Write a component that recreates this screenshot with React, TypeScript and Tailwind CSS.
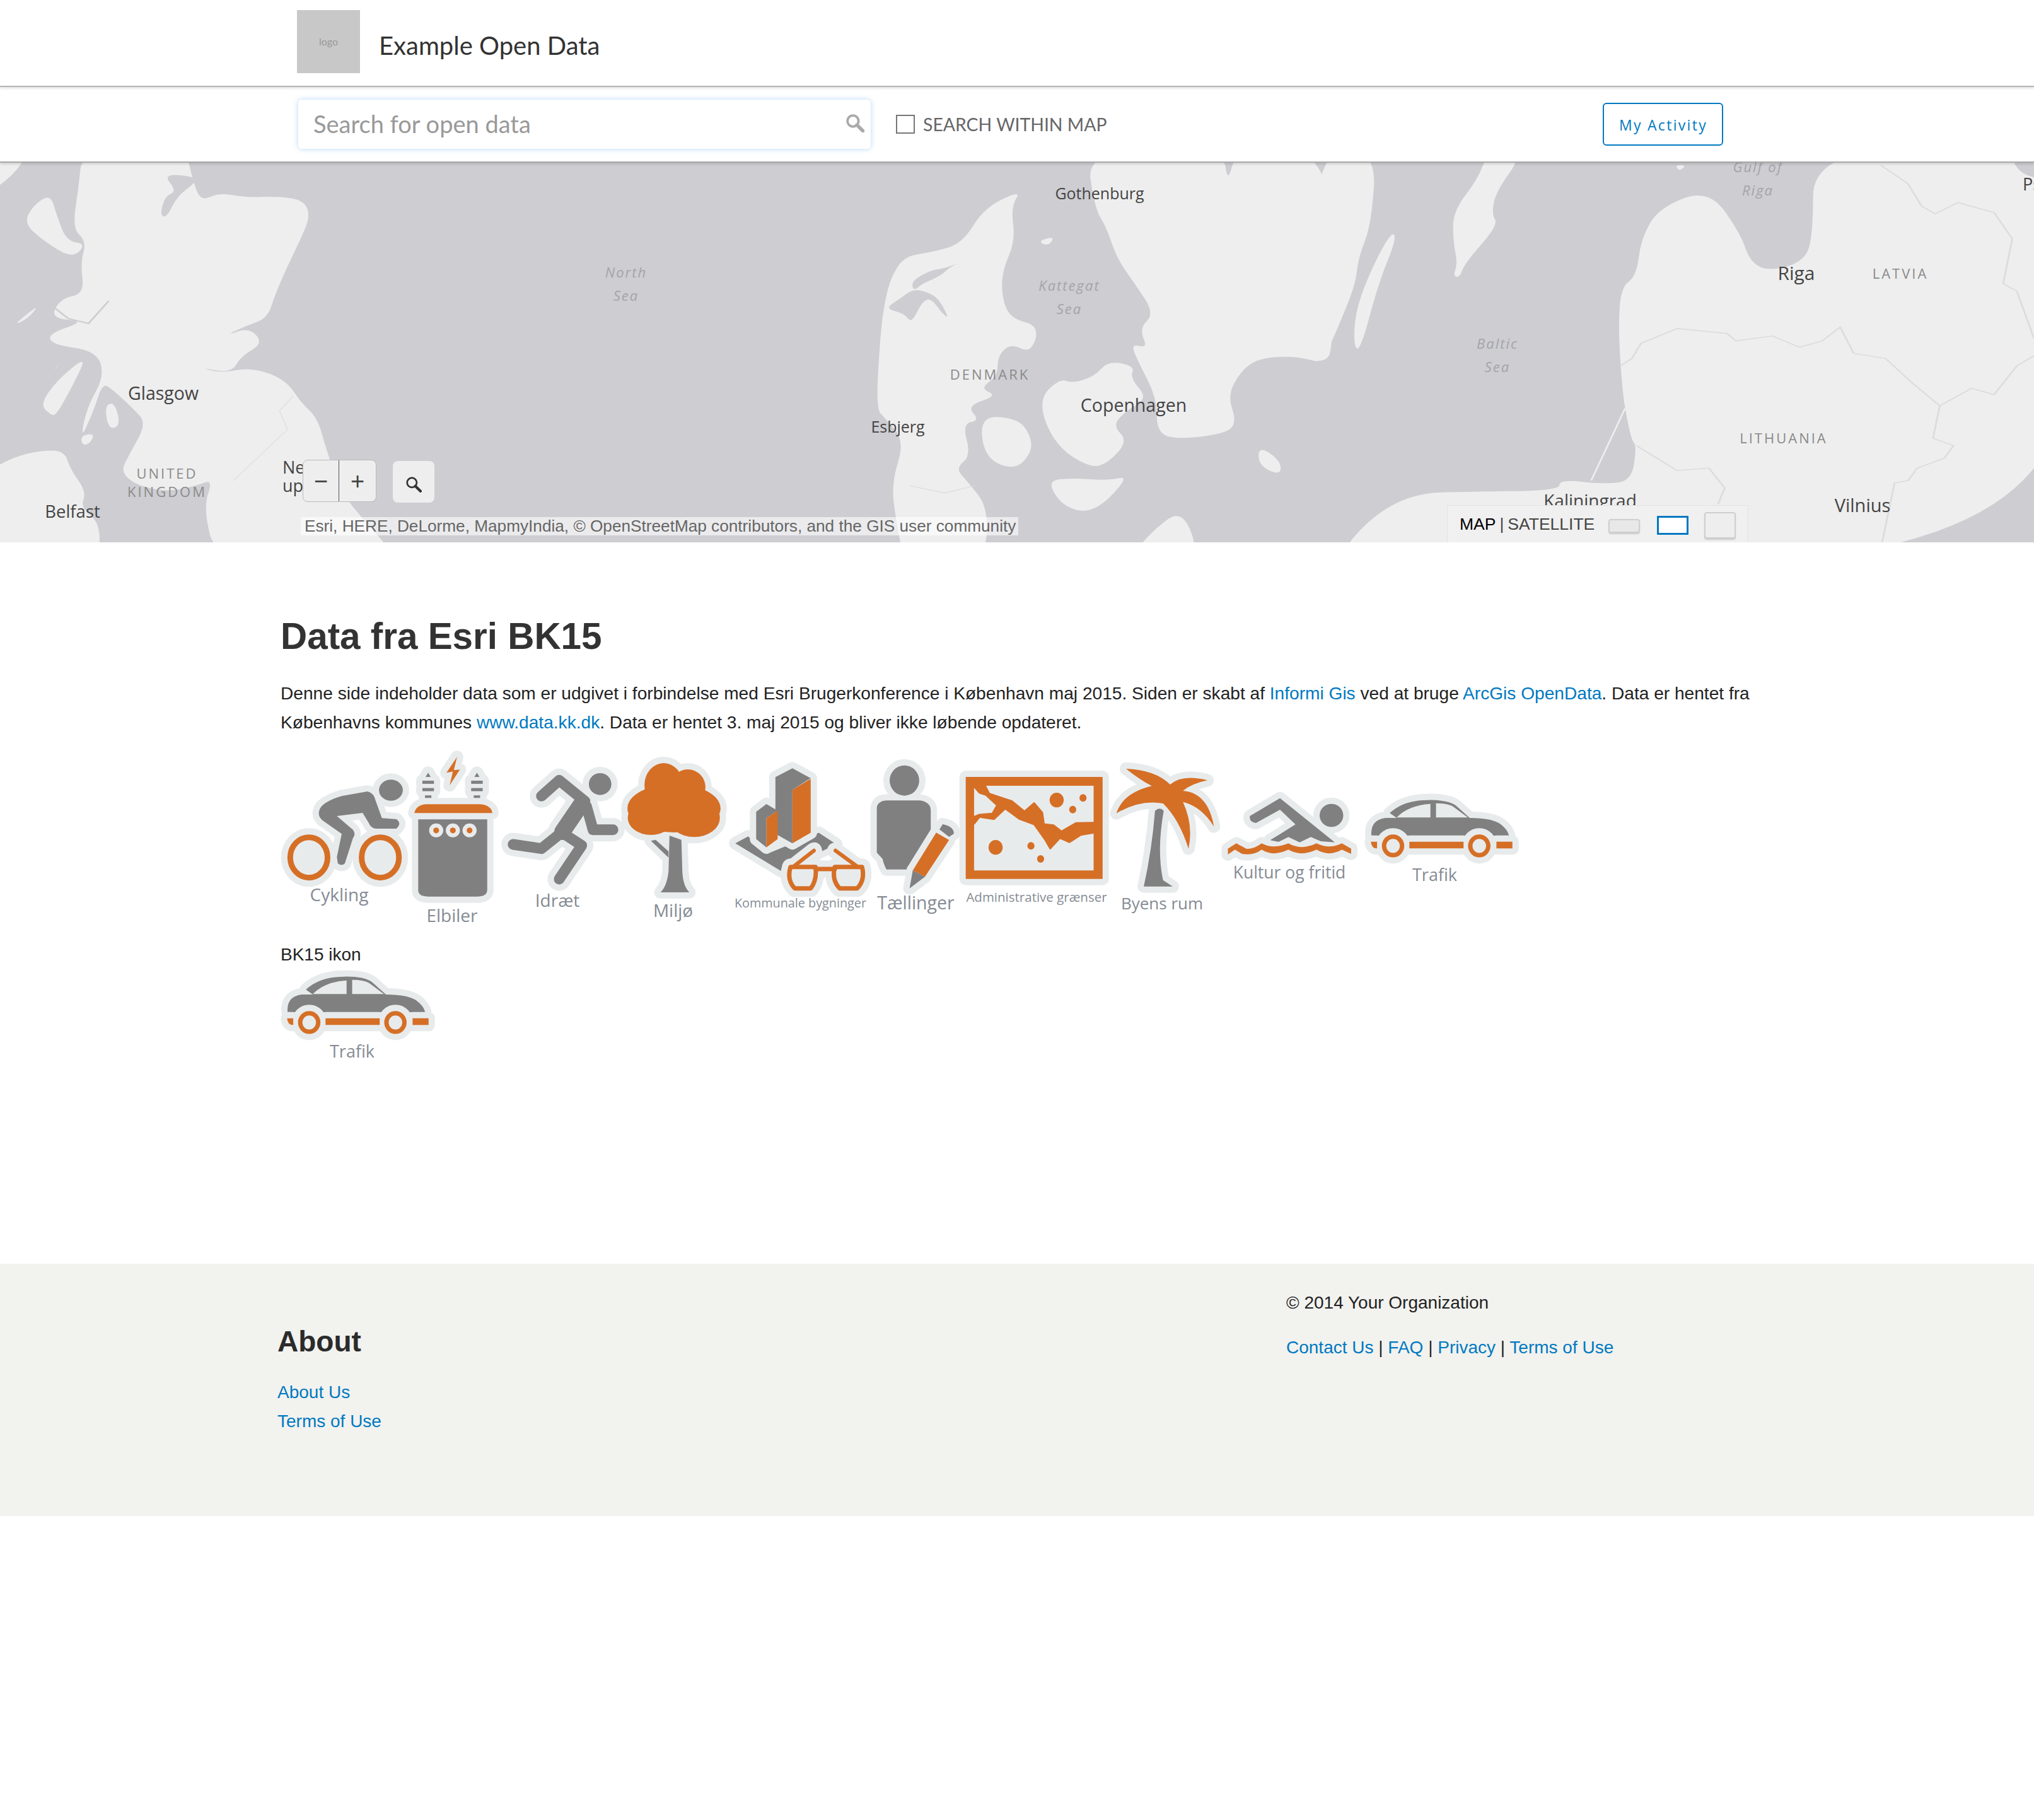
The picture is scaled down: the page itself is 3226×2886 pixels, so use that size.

const ORANGE = '#d56f26'
const GRAY = '#808080'
const HALO = '#e8ebec'
const WATER = '#cdcdd2'
const LAND = '#eeeeee'

type Shape = { d: string; fill?: string; stroke?: string; sw?: number }

// ellipse as a path, icons are drawn in stretched coordinates
function e(cx: number, cy: number, rx: number, ry: number) {
  return `M${cx - rx},${cy} A${rx},${ry} 0 1 0 ${cx + rx},${cy} A${rx},${ry} 0 1 0 ${cx - rx},${cy}Z`
}

// rounds a closed point list into a coastline
function coast(points: string) {
  const pts = points.trim().split(/\s+/).map(p => p.split(',').map(Number))
  const mid = (a: number[], b: number[]) => `${(a[0] + b[0]) / 2},${(a[1] + b[1]) / 2}`
  let d = `M${mid(pts[pts.length - 1], pts[0])}`
  pts.forEach((p, i) => {
    d += ` Q${p[0]},${p[1]} ${mid(p, pts[(i + 1) % pts.length])}`
  })
  return d + 'Z'
}

function Sticker({ view, w, h, layers }: { view: string; w: number; h: number; layers: Shape[][] }) {
  return (
    <svg width={w} height={h} viewBox={view} preserveAspectRatio="none" className="block overflow-visible">
      {layers.map((shapes, i) => (
        <g key={i} strokeLinejoin="round" strokeLinecap="round">
          {shapes.map((s, j) => (
            <path key={j} d={s.d} fill={s.fill ? HALO : 'none'} stroke={HALO} strokeWidth={(s.sw ?? 0) + 20} vectorEffect="non-scaling-stroke" />
          ))}
          {shapes.map((s, j) => (
            <path key={j} d={s.d} fill={s.fill ?? 'none'} stroke={s.stroke ?? 'none'} strokeWidth={s.sw ?? 0} vectorEffect="non-scaling-stroke" />
          ))}
        </g>
      ))}
    </svg>
  )
}

const bike: Shape[][] = [[
  { d: e(393, 212, 37, 50), fill: GRAY },
  { d: 'M170,310 Q175,270 240,240 L320,218 Q340,225 345,260 L365,345 L410,350 Q428,370 410,395 L345,395 Q330,390 325,370 L305,320 L225,335 L275,400 Q285,420 275,440 L250,560 Q240,575 228,560 L225,530 L240,420 L180,355 Q165,335 170,310Z', fill: GRAY },
  { d: e(138, 532, 58, 96), fill: HALO, stroke: ORANGE, sw: 9 },
  { d: e(360, 532, 58, 96), fill: HALO, stroke: ORANGE, sw: 9 },
]]

const charger: Shape[][] = [[
  { d: 'M477,352 H692 V690 Q692,720 660,720 H510 Q477,720 477,690Z', fill: GRAY },
  { d: 'M465,322 Q470,285 500,280 H670 Q705,285 708,322Z', fill: ORANGE },
  { d: e(533, 405, 22, 33), fill: HALO },
  { d: e(585, 405, 22, 33), fill: HALO },
  { d: e(637, 405, 22, 33), fill: HALO },
  { d: e(533, 405, 9, 14), fill: ORANGE },
  { d: e(585, 405, 9, 14), fill: ORANGE },
  { d: e(637, 405, 9, 14), fill: ORANGE },
  { d: 'M508,130 L500,150 H516Z', fill: GRAY },
  { d: 'M490,168 H526 V183 H490Z', fill: GRAY },
  { d: 'M490,203 H526 V218 H490Z', fill: GRAY },
  { d: 'M498,238 H518 V250 H498Z', fill: GRAY },
  { d: 'M660,130 L652,150 H668Z', fill: GRAY },
  { d: 'M642,168 H678 V183 H642Z', fill: GRAY },
  { d: 'M642,203 H678 V218 H642Z', fill: GRAY },
  { d: 'M650,238 H670 V250 H650Z', fill: GRAY },
  { d: 'M598,55 L565,130 L585,125 L575,190 L607,115 L588,118Z', fill: ORANGE },
]]

const runner: Shape[][] = [[
  { d: e(1042, 183, 35, 52), fill: GRAY },
  { d: 'M860,240 L915,165 L995,265', stroke: GRAY, sw: 17 },
  { d: 'M985,275 L925,410', stroke: GRAY, sw: 26 },
  { d: 'M925,410 L860,490 L772,470', stroke: GRAY, sw: 17 },
  { d: 'M935,425 L985,475 L915,635', stroke: GRAY, sw: 17 },
  { d: 'M1000,290 L1020,400 L1082,400', stroke: GRAY, sw: 17 },
]]

const tree: Shape[][] = [[
  { d: 'M1258,430 L1295,450 L1298,600 Q1300,670 1320,700 H1230 Q1250,670 1255,600Z', fill: GRAY },
  { d: 'M1200,455 L1215,450 L1255,505 V535Z', fill: GRAY },
  { d: e(1272, 300, 145, 115), fill: ORANGE },
  { d: e(1240, 190, 60, 105), fill: ORANGE },
  { d: e(1315, 200, 55, 85), fill: ORANGE },
  { d: e(1200, 345, 72, 82), fill: ORANGE },
  { d: e(1335, 345, 80, 92), fill: ORANGE },
]]

const buildings: Shape[][] = [
  [{ d: 'M90,465 L130,432 L190,515 L350,415 L405,470 L255,580 L235,600Z', fill: GRAY }],
  [
    { d: 'M215,150 L268,108 L325,155 L268,210 V465 L215,420Z', fill: GRAY },
    { d: 'M268,210 L325,158 V415 L268,465Z', fill: ORANGE },
    { d: 'M155,315 L187,278 L222,310 L187,345 V485 L155,445Z', fill: GRAY },
    { d: 'M187,345 L222,310 V445 L187,485Z', fill: ORANGE },
  ],
  [
    { d: 'M262,578 H340 Q345,640 325,680 H275 Q250,640 262,578Z', fill: HALO, stroke: ORANGE, sw: 7 },
    { d: 'M400,578 H485 Q495,640 470,680 H415 Q390,640 400,578Z', fill: HALO, stroke: ORANGE, sw: 7 },
    { d: 'M340,588 H400', stroke: ORANGE, sw: 7 },
    { d: 'M270,578 L335,500', stroke: ORANGE, sw: 6 },
    { d: 'M472,578 L402,500', stroke: ORANGE, sw: 6 },
  ],
]

const person: Shape[][] = [
  [
    { d: e(616, 167, 46, 72), fill: GRAY },
    { d: 'M560,262 H665 Q698,270 698,310 V430 L640,590 H560 Q550,560 548,540 L530,510 V300 Q530,265 560,262Z', fill: GRAY },
  ],
  [
    { d: 'M715,415 L755,450 L680,625 L642,595Z', fill: ORANGE },
    { d: 'M642,595 L680,625 L632,680Z', fill: GRAY },
    { d: 'M735,375 Q770,385 770,420 L755,435 L725,400Z', fill: GRAY },
  ],
]

const boundary: Shape[][] = [[
  { d: 'M807,150 H1233 V635 H807Z', fill: ORANGE },
  { d: 'M833,192 H1205 V595 H833Z', fill: HALO },
  { d: 'M833,195 H868 L880,230 L950,265 L990,315 L1020,275 L1045,320 L1050,375 L1080,380 L1105,410 L1150,370 L1205,368 V415 L1165,425 L1130,460 L1100,440 L1070,490 L1055,450 L1020,375 L975,350 L930,300 L895,350 L850,340 L833,372 V340 L850,330 L890,325 L905,285 L870,235 L850,225 L833,195Z', fill: ORANGE, stroke: ORANGE, sw: 3 },
  { d: e(1090, 260, 22, 35), fill: ORANGE },
  { d: e(1172, 250, 11, 18), fill: ORANGE },
  { d: e(1140, 305, 11, 18), fill: ORANGE },
  { d: e(900, 485, 22, 35), fill: ORANGE },
  { d: e(1010, 478, 11, 18), fill: ORANGE },
  { d: e(1040, 540, 11, 18), fill: ORANGE },
]]

const palm: Shape[][] = [[
  { d: 'M1395,310 Q1410,290 1422,310 Q1400,500 1420,640 L1450,670 H1360 Q1385,500 1395,310Z', fill: GRAY },
  { d: 'M1305,110 Q1395,115 1442,185 Q1480,135 1558,165 Q1510,180 1482,215 Q1560,225 1578,385 Q1540,290 1482,268 Q1515,380 1499,490 Q1470,350 1420,275 Q1350,255 1275,322 Q1295,225 1385,192 Q1345,160 1305,110Z', fill: ORANGE },
]]

const swimmer: Shape[][] = [[
  { d: e(698, 332, 42, 55), fill: GRAY },
  { d: 'M515,250 L710,460 L660,455 L625,435 L585,460 L545,435 L510,458 L480,450 L570,375 L515,305 L430,368 Q405,365 408,335Z', fill: GRAY },
  { d: 'M330,490 L360,465 L395,490 Q420,495 450,465 Q490,495 545,465 Q590,500 645,465 Q690,495 735,465 L768,490 V515 L735,495 Q690,530 645,495 Q590,530 545,495 Q490,530 450,495 Q420,525 380,515 L355,495 L330,518Z', fill: ORANGE },
]]

const car: Shape[][] = [
  [
    { d: 'M905,322 Q955,260 1040,260 Q1110,258 1140,285 L1190,345 H930Z', fill: GRAY },
    { d: 'M930,343 Q970,285 1050,278 V343Z', fill: HALO },
    { d: 'M1070,275 Q1110,275 1130,290 L1183,343 H1070Z', fill: HALO },
    { d: 'M840,430 Q835,355 890,345 H1190 Q1270,345 1300,375 Q1325,400 1330,430 H840Z', fill: GRAY },
  ],
  [
    { d: 'M975,458 H1168 V490 H975Z', fill: ORANGE },
    { d: 'M1285,458 H1342 V490 H1285Z', fill: ORANGE },
    { d: 'M838,458 H860 V490 Q840,490 838,458Z', fill: ORANGE },
    { d: e(917, 478, 32, 44), fill: HALO, stroke: ORANGE, sw: 7 },
    { d: e(1224, 478, 32, 44), fill: HALO, stroke: ORANGE, sw: 7 },
  ],
]

function SearchGlyph({ color, size, width }: { color: string; size: number; width: number }) {
  return (
    <svg width={size} height={size} viewBox="0 0 24 24" fill="none" stroke={color} strokeLinecap="round">
      <circle cx="9.5" cy="9.5" r="7" strokeWidth={width} />
      <path d="M14.5 14.5 L22 22" strokeWidth={width + 1.5} />
    </svg>
  )
}

function MapShapes() {
  return (
    <svg viewBox="0 256 3226 602" preserveAspectRatio="none" className="absolute inset-0 h-full w-full blur-[0.6px]">
      {/* Scotland, north England, Ireland */}
      <g transform="translate(0,250) scale(0.6378,0.3954)" fill={LAND}>
        <path d={coast('205,-40 462,-40 480,90 500,170 545,135 610,155 690,150 755,165 772,230 745,330 715,430 685,540 665,640 610,670 560,710 620,675 655,740 600,790 575,860 495,835 550,860 625,835 710,885 750,980 790,1040 812,1170 850,1340 900,1440 1000,1620 540,1620 505,1400 530,1285 490,1310 420,1335 340,1310 300,1255 320,1190 365,1060 330,1000 280,925 255,900 235,1000 200,1130 215,1000 260,870 240,770 130,745 120,700 215,650 125,640 150,560 210,540 200,420 215,330 180,280 195,120')} />
        <path d={coast('60,260 80,190 125,140 140,220 165,330 215,340 180,400 110,330')} />
        <path d={coast('-40,150 30,70 70,-20 -40,-40')} />
        <path d={coast('30,670 100,580 70,640')} />
        <path d={coast('140,840 150,810 135,850')} />
        <path d={coast('100,985 140,890 215,790 190,880 140,1030 125,1025')} />
        <path d={coast('260,990 285,975 300,1070 270,1085')} />
        <path d={coast('205,1150 200,1110 235,1100 225,1140')} />
        <path d={coast('-40,1260 35,1195 100,1170 160,1170 175,1245 215,1335 200,1400 250,1460 245,1620 -40,1620')} />
        <path d={coast('405,60 480,70 490,90 440,150 415,235 398,225 410,150 440,130')} fill={WATER} />
        <path d="M130,590 L170,640 L220,660 L270,570" fill="none" stroke={WATER} strokeWidth="5" />
        <path d="M730,950 L695,1010 L715,1085 L600,1260 L580,1290" fill="none" stroke="#e2e2e2" strokeWidth="3" />
      </g>
      {/* Denmark and Sweden */}
      <g transform="translate(1000,250) scale(0.7015,0.3954)" fill={LAND}>
        <path d={coast('885,125 800,195 750,340 680,375 620,390 590,470 575,570 565,700 555,1000 575,1040 620,1130 590,1300 600,1450 620,1620 800,1620 810,1400 760,1290 735,1240 770,1190 750,1060 790,1050 760,990 830,950 790,920 830,870 830,790 860,740 905,780 925,670 860,640 840,560 840,450 870,330 860,190')} />
        <path d={coast('635,490 680,445 710,440 760,405 725,430 700,470 660,500 640,530')} fill={WATER} />
        <path d={coast('610,560 640,520 680,540 700,570 720,640 705,620 680,560 660,570 635,660 620,620 575,600')} fill={WATER} />
        <path d={coast('1030,-40 1050,200 1075,270 1100,400 1140,500 1185,620 1150,680 1170,760 1130,740 1150,820 1190,960 1190,1100 1240,1125 1350,1100 1370,1050 1350,950 1380,850 1420,800 1500,790 1568,820 1590,760 1590,-40 1370,-40 1350,100 1340,-40')} />
        <path d={coast('1080,810 1140,830 1130,880 1170,960 1120,1010 1090,1070 1125,1130 1080,1220 1040,1240 960,1150 920,970 970,880 1000,900 1050,870')} />
        <path d={coast('790,1030 870,1040 900,1090 910,1170 870,1250 800,1200')} />
        <path d={coast('940,1290 1000,1280 1080,1290 1130,1270 1050,1420 980,1400')} />
        <path d={coast('1120,1620 1180,1490 1250,1400 1290,1620')} />
        <path d={coast('920,330 960,310 945,350')} />
        <path d={coast('1420,1150 1470,1210 1470,1270 1420,1230')} />
        <path d="M630,1310 L710,1340 L780,1310" fill="none" stroke="#dcdcdc" strokeWidth="3" />
      </g>
      {/* Baltic coast */}
      <g transform="translate(2100,250) scale(0.7181,0.3954)" fill={LAND}>
        <path d={coast('-20,-40 115,-40 105,260 75,400 70,500 30,680 -5,820 -40,800')} />
        <path d={coast('150,290 160,320 120,500 80,770 65,750 70,600 110,420')} />
        <path d={coast('440,-20 380,130 370,220 385,265 310,420 300,475 285,470 295,420 285,330 285,210 340,80 360,-20')} />
        <path d={coast('1080,-40 1080,340 1050,420 980,450 940,410 920,300 850,120 740,195 700,320 690,470 655,515 650,700 660,950 670,1050 680,1130 690,1150 680,1290 620,1305 520,1285 520,1330 320,1335 200,1340 100,1440 20,1620 1640,1620 1640,80 1540,75 1510,-40')} />
        <path d={coast('775,25 800,25 785,50')} />
        <path d="M665,1000 L590,1290" fill="none" stroke={LAND} strokeWidth="4" />
        <g fill="none" stroke="#dcdcdc" strokeWidth="4">
          <path d="M655,830 L680,800 L700,740 L780,680 L890,700 L910,730 L990,710 L1050,755 L1100,730 L1140,675 L1170,780 L1240,800 L1300,900 L1360,990 L1430,920 L1480,945 L1530,830 L1568,790" />
          <path d="M1360,990 L1345,1120 L1390,1150 L1370,1200 L1310,1240 L1290,1290 L1260,1300 L1230,1560" />
          <path d="M690,1150 L780,1250 L850,1240 L885,1320 L870,1385" />
          <path d="M1230,25 L1290,100 L1320,190 L1350,220 L1400,175 L1480,215 L1520,320 L1500,500 L1530,530 L1568,720" />
        </g>
      </g>
    </svg>
  )
}

const figures = [
  { label: 'Cykling', view: '50 125 392 528', w: 200, h: 176, layers: bike, box: 'w-[200px] pt-[42px]', text: 'mt-[2px] pr-[14px] text-[28px]' },
  { label: 'Elbiler', view: '445 30 275 715', w: 140, h: 238, layers: charger, box: 'ml-[2px] w-[140px] pt-[10px]', text: 'mt-[5px] text-[28px]' },
  { label: 'Idræt', view: '745 110 360 558', w: 184, h: 186, layers: runner, box: 'ml-[13px] w-[184px] pt-[37px]', text: 'mt-[6px] pr-[16px] text-[28px]' },
  { label: 'Miljø', view: '1115 55 320 675', w: 163, h: 225, layers: tree, box: 'ml-[5px] w-[163px] pt-[18px]', text: 'mt-[2px] pr-[6px] text-[28px]' },
  { label: 'Kommunale bygninger', view: '68 80 442 625', w: 225, h: 208, layers: buildings, box: 'ml-[3px] w-[225px] pt-[27px]', text: 'mt-[-1px] pl-[4px] text-[19.8px]' },
  { label: 'Tællinger', view: '515 75 265 630', w: 135, h: 210, layers: person, box: 'ml-[3px] w-[135px] pt-[25px]', text: 'mt-[-2px] pl-[4px] text-[28.5px]' },
  { label: 'Administrative grænser', view: '788 120 467 540', w: 238, h: 180, layers: boundary, box: 'ml-[4px] w-[238px] pt-[40px]', text: 'mt-[4px] pl-[6px] text-[20.5px]' },
  { label: 'Byens rum', view: '1262 80 333 618', w: 170, h: 206, layers: palm, box: 'ml-[4px] w-[170px] pt-[27px]', text: 'mt-[1px] pr-[12px] text-[26px]' },
  { label: 'Kultur og fritid', view: '302 230 493 324', w: 220, h: 108, layers: swimmer, box: 'ml-[1px] w-[220px] pt-[77px]', text: 'text-[26.5px]' },
  { label: 'Trafik', view: '815 228 550 327', w: 245, h: 109, layers: car, box: 'ml-[9px] w-[245px] pt-[76px]', text: 'mt-[4px] pr-[22px] text-[27px]' },
]

function Figure({ f }: { f: (typeof figures)[number] }) {
  return (
    <div className={f.box}>
      <Sticker view={f.view} w={f.w} h={f.h} layers={f.layers} />
      <div className={`whitespace-nowrap text-center font-['Open_Sans',sans-serif] leading-[32px] text-[#858b94] ${f.text}`}>{f.label}</div>
    </div>
  )
}

const city = "absolute -translate-x-1/2 -translate-y-1/2 whitespace-nowrap font-['Open_Sans',sans-serif] leading-none text-[#444]"
const country = "absolute -translate-x-1/2 -translate-y-1/2 whitespace-nowrap font-['Open_Sans',sans-serif] text-[22px] leading-none tracking-[3px] text-[#8a8a8a]"
const sea = "absolute -translate-x-1/2 -translate-y-1/2 whitespace-nowrap font-['Open_Sans',sans-serif] text-[22px] italic leading-none tracking-[2px] text-[#a4a4a9]"

export default function App() {
  return (
    <div className="min-h-[2886px] bg-white font-['Liberation_Sans',Arial,sans-serif] text-[28px] text-[#222]">
      <header className="relative z-20 flex h-[138px] items-start border-b-2 border-[#b4b4b4] pl-[471px] pt-[16px] shadow-[0_2px_4px_rgba(0,0,0,0.12)]">
        <div className="flex h-[100px] w-[100px] items-center justify-center bg-[#c8c8c8] font-['Lato',sans-serif] text-[16px] text-[#999]">logo</div>
        <div className="ml-[30px] mt-[31px] font-['Lato',sans-serif] text-[40px] leading-[50px] text-[#333]">Example Open Data</div>
      </header>

      <div className="relative z-10 flex h-[120px] items-center border-b-2 border-[#aaa] pl-[473px] shadow-[0_2px_4px_rgba(0,0,0,0.15)]">
        <div className="relative h-[78px] w-[908px] rounded-[6px] bg-white shadow-[0_0_8px_rgba(120,180,240,0.55)]">
          <input
            placeholder="Search for open data"
            className="h-full w-full bg-transparent pb-[3px] pl-[24px] font-['Lato',sans-serif] text-[38px] text-[#333] outline-none placeholder:text-[#999]"
          />
          <div className="absolute right-[10px] top-[22px]">
            <SearchGlyph color="#aaa" size={30} width={3} />
          </div>
        </div>
        <div className="ml-[40px] h-[30px] w-[30px] border-2 border-[#777] bg-white" />
        <div className="ml-[13px] font-['Lato',sans-serif] text-[28.4px] text-[#666]">SEARCH WITHIN MAP</div>
        <button className="ml-[787px] h-[68px] w-[191px] rounded-[6px] border-2 border-[#0079c1] pt-[2px] font-['Open_Sans',sans-serif] text-[23px] tracking-[2.3px] text-[#0079c1]">My Activity</button>
      </div>

      <div className="relative h-[602px] overflow-hidden bg-[#cdcdd2]">
        <MapShapes />
        <span className={`${city} left-[1744px] top-[48px] text-[25px]`}>Gothenburg</span>
        <span className={`${city} left-[2849px] top-[175px] text-[30px] text-[#333]`}>Riga</span>
        <span className={`${country} left-[3014px] top-[175px]`}>LATVIA</span>
        <span className={`${city} left-[259px] top-[365px] text-[28.5px]`}>Glasgow</span>
        <span className={`${city} left-[1424px] top-[418px] text-[25px]`}>Esbjerg</span>
        <span className={`${city} left-[1798px] top-[384px] text-[28.5px]`}>Copenhagen</span>
        <span className={`${country} left-[1570px] top-[335px]`}>DENMARK</span>
        <span className={`${country} left-[2829px] top-[436px]`}>LITHUANIA</span>
        <span className={`${city} left-[2954px] top-[542px] text-[29px]`}>Vilnius</span>
        <span className={`${city} left-[2522px] top-[535px] text-[28px]`}>Kaliningrad</span>
        <span className={`${city} left-[115px] top-[553px] text-[27.5px]`}>Belfast</span>
        <span className={`${country} left-[265px] top-[492px]`}>UNITED</span>
        <span className={`${country} left-[265px] top-[521px]`}>KINGDOM</span>
        <span className={`${sea} left-[993px] top-[173px]`}>North</span>
        <span className={`${sea} left-[993px] top-[210px]`}>Sea</span>
        <span className={`${sea} left-[1696px] top-[194px]`}>Kattegat</span>
        <span className={`${sea} left-[1696px] top-[231px]`}>Sea</span>
        <span className={`${sea} left-[2375px] top-[286px]`}>Baltic</span>
        <span className={`${sea} left-[2375px] top-[323px]`}>Sea</span>
        <span className={`${sea} left-[2788px] top-[6px]`}>Gulf of</span>
        <span className={`${sea} left-[2788px] top-[43px]`}>Riga</span>
        <span className="absolute left-[448px] top-[468px] font-['Open_Sans',sans-serif] text-[27px] leading-[29px] text-[#444]">Ne<br />up</span>
        <span className="absolute left-[3208px] top-[20px] font-['Open_Sans',sans-serif] text-[27px] leading-none text-[#444]">Pskov</span>

        <div className="absolute left-[480px] top-[471px] flex h-[67px] w-[117px] rounded-[8px] border border-[#bbb] bg-[#eee] text-[38px] leading-none text-[#444]">
          <div className="flex w-[57px] items-center justify-center border-r border-[#555]">−</div>
          <div className="flex flex-1 items-center justify-center">+</div>
        </div>
        <div className="absolute left-[623px] top-[473px] flex h-[66px] w-[66px] items-center justify-center rounded-[8px] bg-[#eee] pt-[8px]">
          <SearchGlyph color="#333" size={26} width={2.5} />
        </div>

        <div className="absolute left-[477px] top-[562px] flex h-[29px] w-[1138px] items-center bg-white/60 pl-[6px] text-[26.2px] text-[#666]">
          Esri, HERE, DeLorme, MapmyIndia, © OpenStreetMap contributors, and the GIS user community
        </div>

        <div className="absolute left-[2295px] top-[543px] flex h-[60px] w-[478px] items-center border border-[#e2e2e2] bg-[#f0f0f0] pl-[19px] pt-[2px] text-[26.5px]">
          <span className="text-black">MAP</span>
          <span className="ml-[6px] text-[#444]">|</span>
          <span className="ml-[6px] text-[#444]">SATELLITE</span>
          <div className="absolute left-[255px] top-[21px] h-[22px] w-[50px] rounded-[4px] border-2 border-[#cfcfcf] bg-[#e8e8e8] shadow-[0_2px_2px_rgba(0,0,0,0.15)]" />
          <div className="absolute left-[332px] top-[16px] h-[30px] w-[50px] border-[3px] border-[#0079c1] bg-white" />
          <div className="absolute left-[407px] top-[10px] h-[42px] w-[50px] rounded-[4px] border-2 border-[#cfcfcf] bg-[#eee] shadow-[0_2px_2px_rgba(0,0,0,0.15)]" />
        </div>
      </div>

      <main className="pl-[445px]">
        <h1 className="pt-[116px] text-[58.4px] font-bold leading-[66px] text-[#333]">Data fra Esri BK15</h1>
        <p className="mt-[35px] whitespace-nowrap text-[28.12px] leading-[46px]">
          Denne side indeholder data som er udgivet i forbindelse med Esri Brugerkonference i København maj 2015. Siden er skabt af <a className="text-[#0079c1]">Informi Gis</a> ved at bruge <a className="text-[#0079c1]">ArcGis OpenData</a>. Data er hentet fra
          <br />
          Københavns kommunes <a className="text-[#0079c1]">www.data.kk.dk</a>. Data er hentet 3. maj 2015 og bliver ikke løbende opdateret.
        </p>
        <div className="mt-[13px] flex items-start">
          {figures.map(f => (
            <Figure key={f.label} f={f} />
          ))}
        </div>
        <div className="mt-[24px] leading-[46px]">BK15 ikon</div>
        <div className="mt-[1px] w-[245px]">
          <Sticker view="815 228 550 327" w={245} h={109} layers={car} />
          <div className="mt-[4px] pr-[18px] text-center font-['Open_Sans',sans-serif] text-[27px] leading-[32px] text-[#858b94]">Trafik</div>
        </div>
      </main>

      <footer className="mt-[321px] flex h-[400px] bg-[#f2f2ef] pl-[440px]">
        <div className="w-[1600px] pt-[95px]">
          <h2 className="text-[46px] font-bold leading-[56px] text-[#2b2b2b]">About</h2>
          <ul className="mt-[30px] leading-[46px] text-[#0079c1]">
            <li>About Us</li>
            <li>Terms of Use</li>
          </ul>
        </div>
        <div className="pt-[39px] leading-[46px]">
          <div>© 2014 Your Organization</div>
          <div className="mt-[25px]">
            <a className="text-[#0079c1]">Contact Us</a> | <a className="text-[#0079c1]">FAQ</a> | <a className="text-[#0079c1]">Privacy</a> | <a className="text-[#0079c1]">Terms of Use</a>
          </div>
        </div>
      </footer>
    </div>
  )
}
